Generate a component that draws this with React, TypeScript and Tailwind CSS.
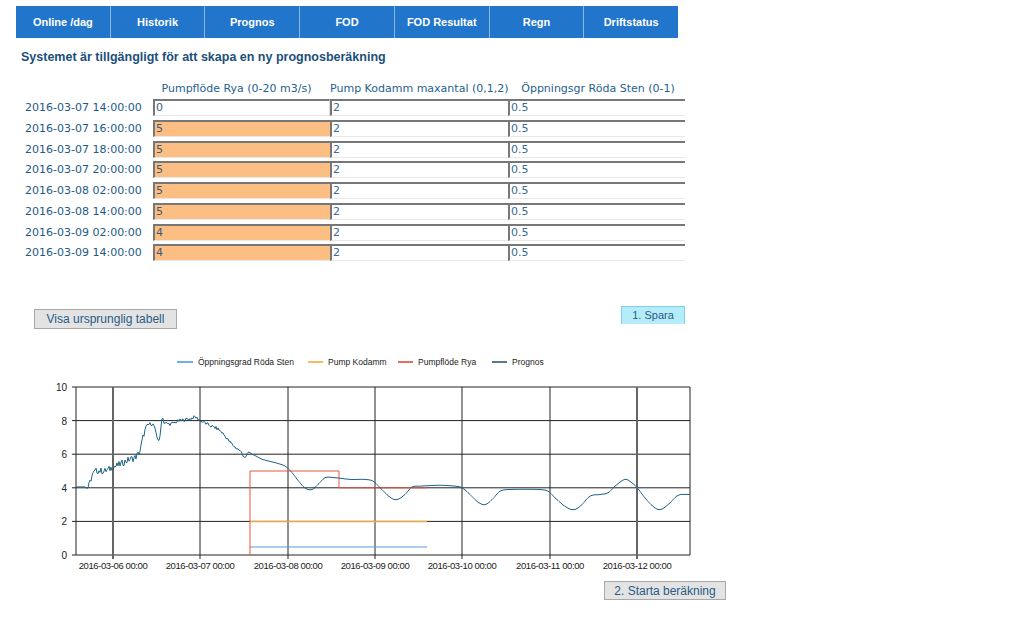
import React from 'react';

const tabs = ['Online /dag', 'Historik', 'Prognos', 'FOD', 'FOD Resultat', 'Regn', 'Driftstatus'];

const rows: [string, string][] = [
  ['2016-03-07 14:00:00', '0'],
  ['2016-03-07 16:00:00', '5'],
  ['2016-03-07 18:00:00', '5'],
  ['2016-03-07 20:00:00', '5'],
  ['2016-03-08 02:00:00', '5'],
  ['2016-03-08 14:00:00', '5'],
  ['2016-03-09 02:00:00', '4'],
  ['2016-03-09 14:00:00', '4'],
];

// plot area in page coords
const X0 = 76, X1 = 690, Y0 = 388, Y1 = 556;
const vy = (v: number) => Y1 - (v * (Y1 - Y0)) / 10;

const keys: [number, number][] = [
  [76, 4.05], [85, 4.05], [88, 4.0], [92, 4.7], [96, 5.0], [105, 5.0], [112, 5.2], [120, 5.4],
  [130, 5.7], [135, 5.8], [140, 6.2], [143, 7.0], [146, 7.6], [150, 7.8], [154, 7.7], [156, 7.2],
  [158, 6.9], [160, 7.0], [162, 8.2], [164, 7.9], [170, 7.8], [180, 8.0], [190, 8.1], [195, 8.2],
  [200, 8.0], [210, 7.7], [220, 7.4], [232, 6.6], [240, 6.2], [246, 5.8], [248, 6.1], [252, 6.0],
  [262, 5.7], [275, 5.5], [285, 5.3], [292, 4.9], [300, 4.3], [306, 3.95], [312, 3.9], [318, 4.2],
  [325, 4.6], [335, 4.6], [350, 4.5], [365, 4.5], [373, 4.4], [380, 4.0], [390, 3.45], [397, 3.3],
  [405, 3.6], [412, 4.05], [420, 4.1], [440, 4.15], [455, 4.1], [462, 4.0], [470, 3.6], [478, 3.15],
  [485, 3.0], [492, 3.3], [500, 3.8], [510, 3.9], [540, 3.9], [548, 3.8], [555, 3.4], [565, 2.9],
  [573, 2.7], [580, 2.9], [590, 3.5], [600, 3.6], [608, 3.7], [615, 4.1], [625, 4.5], [632, 4.3],
  [637, 4.0], [645, 3.4], [653, 2.9], [660, 2.7], [668, 3.0], [678, 3.55], [690, 3.6],
];

function prognosPath() {
  const pts: string[] = [];
  for (let i = 0; i < keys.length - 1; i++) {
    const p0 = keys[Math.max(0, i - 1)], p1 = keys[i], p2 = keys[i + 1], p3 = keys[Math.min(keys.length - 1, i + 2)];
    for (let x = p1[0]; x < p2[0]; x += 1) {
      const t = (x - p1[0]) / (p2[0] - p1[0]);
      const t2 = t * t, t3 = t2 * t;
      let v = 0.5 * (2 * p1[1] + (-p0[1] + p2[1]) * t + (2 * p0[1] - 5 * p1[1] + 4 * p2[1] - p3[1]) * t2 + (-p0[1] + 3 * p1[1] - 3 * p2[1] + p3[1]) * t3);
      if (x > 88 && x < 250) {
        const n = Math.sin(x * 12.9898) * 43758.5453;
        const amp = x < 145 ? 0.2 : 0.1;
        v += (n - Math.floor(n) - 0.5) * 2 * amp;
      }
      pts.push(`${x},${vy(v).toFixed(1)}`);
    }
  }
  pts.push(`690,${vy(3.6)}`);
  return 'M' + pts.join(' L');
}

const vLines = [113, 200, 288, 375, 462, 550, 637];
const xLabels = ['2016-03-06 00:00', '2016-03-07 00:00', '2016-03-08 00:00', '2016-03-09 00:00', '2016-03-10 00:00', '2016-03-11 00:00', '2016-03-12 00:00'];

const Chart = () => (
  <svg width={710} height={228} className="block" style={{ fontFamily: '"Liberation Sans", Arial, sans-serif' }}>
    <g transform="translate(0,-350)">
      {/* legend */}
      <g fontSize="8.5" fill="#222">
        <line x1={177} x2={193} y1={363} y2={363} stroke="#4a8fdc" strokeWidth={1.5} />
        <text x={198} y={366}>Öppningsgrad Röda Sten</text>
        <line x1={308} x2={323} y1={363} y2={363} stroke="#f5a433" strokeWidth={1.5} />
        <text x={328} y={366}>Pump Kodamm</text>
        <line x1={398} x2={413} y1={363} y2={363} stroke="#e23a22" strokeWidth={1.5} />
        <text x={418} y={366}>Pumpflöde Rya</text>
        <line x1={492} x2={507} y1={363} y2={363} stroke="#1b4f72" strokeWidth={1.5} />
        <text x={512} y={366}>Prognos</text>
      </g>
      {/* grid */}
      {[0, 2, 4, 6, 8, 10].map(v => (
        <g key={v}>
          <line x1={X0 - 4} x2={X1} y1={vy(v)} y2={vy(v)} stroke="#222" strokeWidth={1} />
          <text x={67} y={vy(v) + 4} fontSize="10" textAnchor="end" fill="#222">{v}</text>
        </g>
      ))}
      {vLines.map((x, i) => (
        <g key={x}>
          <line x1={x} x2={x} y1={Y0} y2={Y1 + 4} stroke={i === 0 || i === 6 ? '#666' : '#222'} strokeWidth={i === 0 || i === 6 ? 2 : 1} />
          <text x={x} y={570} fontSize="9.5" textAnchor="middle" fill="#222" letterSpacing="-0.4">{xLabels[i]}</text>
        </g>
      ))}
      <line x1={X0} x2={X0} y1={Y0} y2={Y1} stroke="#222" />
      <line x1={X1} x2={X1} y1={Y0} y2={Y1} stroke="#222" />
      {/* series */}
      <line x1={250} x2={427} y1={548} y2={548} stroke="#5b9be6" strokeWidth={1.2} />
      <line x1={250} x2={427} y1={vy(2)} y2={vy(2)} stroke="#e9aa45" strokeWidth={1.5} />
      <path d={`M250,${vy(0)} L250,${vy(5)} L339,${vy(5)} L339,${vy(4)} L427,${vy(4)}`} fill="none" stroke="#e8553e" strokeWidth={1} />
      <path d={prognosPath()} fill="none" stroke="#1f6485" strokeWidth={1} strokeLinejoin="round" />
    </g>
  </svg>
);

export default function App() {
  return (
    <div className="min-h-screen w-[1023px] bg-white pt-[6px]" style={{ fontFamily: '"DejaVu Sans", Verdana, sans-serif' }}>
      <nav className="ml-[16px] flex w-[662px] h-[32px] bg-[#2175cb]" style={{ fontFamily: '"Liberation Sans", Arial, sans-serif' }}>
        {tabs.map((t, i) => (
          <div key={t} className={`flex-1 flex items-center justify-center text-white font-bold text-[11px] ${i > 0 ? 'border-l border-[#8ab8e6]' : ''}`}>
            {t}
          </div>
        ))}
      </nav>

      <h2 className="ml-[21px] mt-[11px] text-[12.5px] leading-[16px] font-bold text-[#1c4f7c]" style={{ fontFamily: '"Liberation Sans", Arial, sans-serif' }}>
        Systemet är tillgängligt för att skapa en ny prognosberäkning
      </h2>

      <div className="mt-[16px] text-[11px] text-[#25618f]">
        <div className="flex h-[16px] items-center whitespace-nowrap">
          <div className="w-[153px]" />
          <div className="w-[177px] text-center pr-[10px]">Pumpflöde Rya (0-20 m3/s)</div>
          <div className="w-[178px] text-center pr-[3px]">Pump Kodamm maxantal (0,1,2)</div>
          <div className="w-[177px] text-center pl-[3px]">Öppningsgr Röda Sten (0-1)</div>
        </div>
        <div className="mt-[2px]">
          {rows.map(([d, v], i) => (
            <div key={d} className="flex h-[20.75px]">
              <div className="w-[153px] pl-[25px] leading-[17px] text-[#1e5a88]">{d}</div>
              <div className={`w-[177px] h-[17px] border-t-2 border-l-2 border-t-[#777] border-l-[#777] border-b border-b-[#e8e8e8] pl-[1px] leading-[14px] text-[#3c5a78] ${i === 0 ? 'bg-white border-r border-r-[#ddd]' : 'bg-[#fdbe83]'}`}>{v}</div>
              <div className="w-[178px] h-[17px] border-t-2 border-l-2 border-t-[#777] border-l-[#777] border-b border-b-[#e8e8e8] pl-[1px] leading-[14px] text-[#3c6a90]">2</div>
              <div className="w-[177px] h-[17px] border-t-2 border-l-2 border-t-[#777] border-l-[#777] border-b border-b-[#e8e8e8] pl-[1px] leading-[14px] text-[#3c6a90]">0.5</div>
            </div>
          ))}
        </div>
      </div>

      <div className="mt-[41px] flex items-start w-[685px]">
        <button className="ml-[34px] mt-[3px] w-[143px] h-[20px] bg-[#e3e3e3] border border-[#a9a9a9] text-[12px] text-[#2a5b86]" style={{ fontFamily: '"Liberation Sans", Tahoma, sans-serif' }}>
          Visa ursprunglig tabell
        </button>
        <button className="ml-auto w-[64px] h-[18px] bg-[#b5ecfa] border border-b-0 border-[#7fd0ea] text-[11px] text-[#2a5b86]" style={{ fontFamily: '"Liberation Sans", Tahoma, sans-serif' }}>
          1. Spara
        </button>
      </div>

      <div className="mt-[20px]">
        <Chart />
      </div>

      <div className="mt-[1px] ml-[604px]">
        <button className="w-[122px] h-[19px] bg-[#e3e3e3] border border-[#a9a9a9] text-[12px] text-[#2a5b86]" style={{ fontFamily: '"Liberation Sans", Tahoma, sans-serif' }}>
          2. Starta beräkning
        </button>
      </div>
    </div>
  );
}
